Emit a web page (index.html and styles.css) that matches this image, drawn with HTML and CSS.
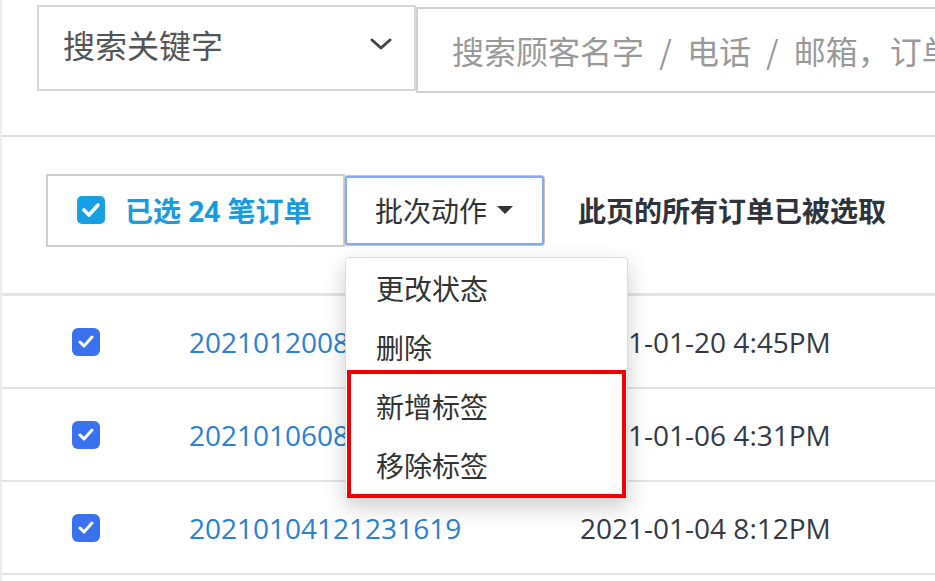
FILE: index.html
```html
<!DOCTYPE html>
<html lang="zh">
<head>
    <meta charset="utf-8">
    <meta name="viewport" content="width=device-width, initial-scale=1.0">
    <title>订单</title>
    <link rel="stylesheet" href="styles.css">
</head>

<body>
    <div class="side">
        <section class="search">
            <div class="keyfield">
                <span>搜索关键字</span>
                <svg class="chevron" width="22" height="12" viewBox="0 0 22 12">
                    <polyline points="2,2 11,10 20,2" fill="none" stroke="#444" stroke-width="3" stroke-linecap="round" stroke-linejoin="round"/>
                </svg>
            </div>
            <div class="query">搜索顾客名字 / 电话 / 邮箱，订单号码</div>
        </section>

        <section class="toolbar">
            <div class="selected">
                <span class="box box-sky">
                    <svg width="18" height="14" viewBox="0 0 18 14"><polyline points="2,7 7,12 16,2" fill="none" stroke="#fff" stroke-width="3.6" stroke-linecap="round" stroke-linejoin="round"/></svg>
                </span>
                <span>已选 24 笔订单</span>
            </div>
            <div class="action-wrap">
                <button class="action">批次动作 <i class="caret"></i></button>
                <div class="menu">
                    <p>更改状态</p>
                    <p>删除</p>
                    <p>新增标签</p>
                    <p>移除标签</p>
                    <div class="highlight"></div>
                </div>
            </div>
            <p class="note">此页的所有订单已被选取</p>
        </section>

        <section class="orders">
            <div class="row">
                <span class="box box-blue">
                    <svg width="16" height="14" viewBox="0 0 16 14"><polyline points="2,7 6,11 14,2" fill="none" stroke="#fff" stroke-width="3" stroke-linecap="round" stroke-linejoin="round"/></svg>
                </span>
                <a class="num">20210120084523116</a>
                <span class="date">2021-01-20 4:45PM</span>
            </div>
            <div class="row">
                <span class="box box-blue">
                    <svg width="16" height="14" viewBox="0 0 16 14"><polyline points="2,7 6,11 14,2" fill="none" stroke="#fff" stroke-width="3" stroke-linecap="round" stroke-linejoin="round"/></svg>
                </span>
                <a class="num">20210106083112208</a>
                <span class="date">2021-01-06 4:31PM</span>
            </div>
            <div class="row">
                <span class="box box-blue">
                    <svg width="16" height="14" viewBox="0 0 16 14"><polyline points="2,7 6,11 14,2" fill="none" stroke="#fff" stroke-width="3" stroke-linecap="round" stroke-linejoin="round"/></svg>
                </span>
                <a class="num">20210104121231619</a>
                <span class="date">2021-01-04 8:12PM</span>
            </div>
        </section>
    </div>
</body>
</html>
```

FILE: styles.css
```css
body {
    margin: 0;
    background-color: #fff;
    font-family: "Open Sans", "Noto Sans CJK SC", sans-serif;
    font-size: 28px;
    color: #333a45;
    overflow: hidden;
}

.side {
    border-left: 2px solid #ededed;
    min-height: 581px;
}

/* search */
.search {
    display: flex;
    align-items: flex-start;
    box-sizing: border-box;
    height: 137px;
    padding-left: 35px;
    border-bottom: 2px solid #dedede;
}

.keyfield {
    display: flex;
    align-items: center;
    justify-content: space-between;
    box-sizing: border-box;
    width: 379px;
    height: 86px;
    margin-top: 5px;
    padding: 0 22px 8px 24px;
    border: 2px solid #d6d6d6;
    font-size: 32px;
    color: #555;
}

.query {
    flex: 1;
    box-sizing: border-box;
    height: 86px;
    margin-top: 7px;
    padding-left: 34px;
    border: 2px solid #d0d0d0;
    border-right: none;
    font-family: "Noto Sans CJK SC", sans-serif;
    font-size: 32px;
    line-height: 82px;
    word-spacing: 8px;
    color: #999;
    white-space: nowrap;
    overflow: hidden;
}

/* toolbar */
.toolbar {
    display: flex;
    align-items: center;
    box-sizing: border-box;
    height: 159px;
    padding: 0 0 10px 44px;
    border-bottom: 3px solid #e4e4e4;
}

.selected {
    display: flex;
    align-items: center;
    box-sizing: border-box;
    width: 299px;
    height: 73px;
    padding-left: 29px;
    border: 2px solid #cfcfcf;
    font-weight: bold;
    color: #1a9be0;
}

.box {
    display: inline-flex;
    align-items: center;
    justify-content: center;
    width: 28px;
    height: 28px;
    border-radius: 5px;
}

.box-sky {
    background-color: #17a0e3;
    margin-right: 20px;
}

.box-blue {
    background-color: #3a71ef;
    border-radius: 6px;
}

.action-wrap {
    position: relative;
}

.action {
    display: flex;
    align-items: center;
    box-sizing: border-box;
    width: 199px;
    height: 69px;
    padding: 0 0 0 28px;
    border: 2px solid #85a9f3;
    border-radius: 3px;
    box-shadow: 0 0 0 1px #c4c4c4;
    background-color: #fff;
    font-family: inherit;
    font-size: 28px;
    color: #333;
}

.caret {
    width: 0;
    height: 0;
    margin-left: 10px;
    border-left: 8px solid transparent;
    border-right: 8px solid transparent;
    border-top: 8px solid #333;
}

.note {
    margin: 0 0 0 34px;
    font-weight: bold;
    color: #2e333c;
}

.menu {
    position: absolute;
    top: 81px;
    left: 0;
    z-index: 2;
    box-sizing: border-box;
    width: 283px;
    padding: 2px 0;
    border: 1px solid #dcdcdc;
    border-radius: 4px;
    background-color: #fff;
    box-shadow: 0 8px 22px rgba(0, 0, 0, 0.2);
}

.menu p {
    margin: 0;
    height: 59px;
    line-height: 59px;
    padding-left: 30px;
    color: #333;
}

/* annotation frame over the two tag items */
.highlight {
    position: absolute;
    top: 112px;
    left: 1px;
    box-sizing: border-box;
    width: 279px;
    height: 128px;
    border: 4px solid #f20000;
}

/* orders */
.row {
    display: flex;
    align-items: center;
    height: 91px;
    padding-left: 70px;
    border-bottom: 2px solid #e3e3e3;
}

.row .box {
    margin-right: 89px;
}

.num {
    width: 391px;
    color: #2b80d3;
    white-space: nowrap;
}

.date {
    color: #333a45;
}
```
